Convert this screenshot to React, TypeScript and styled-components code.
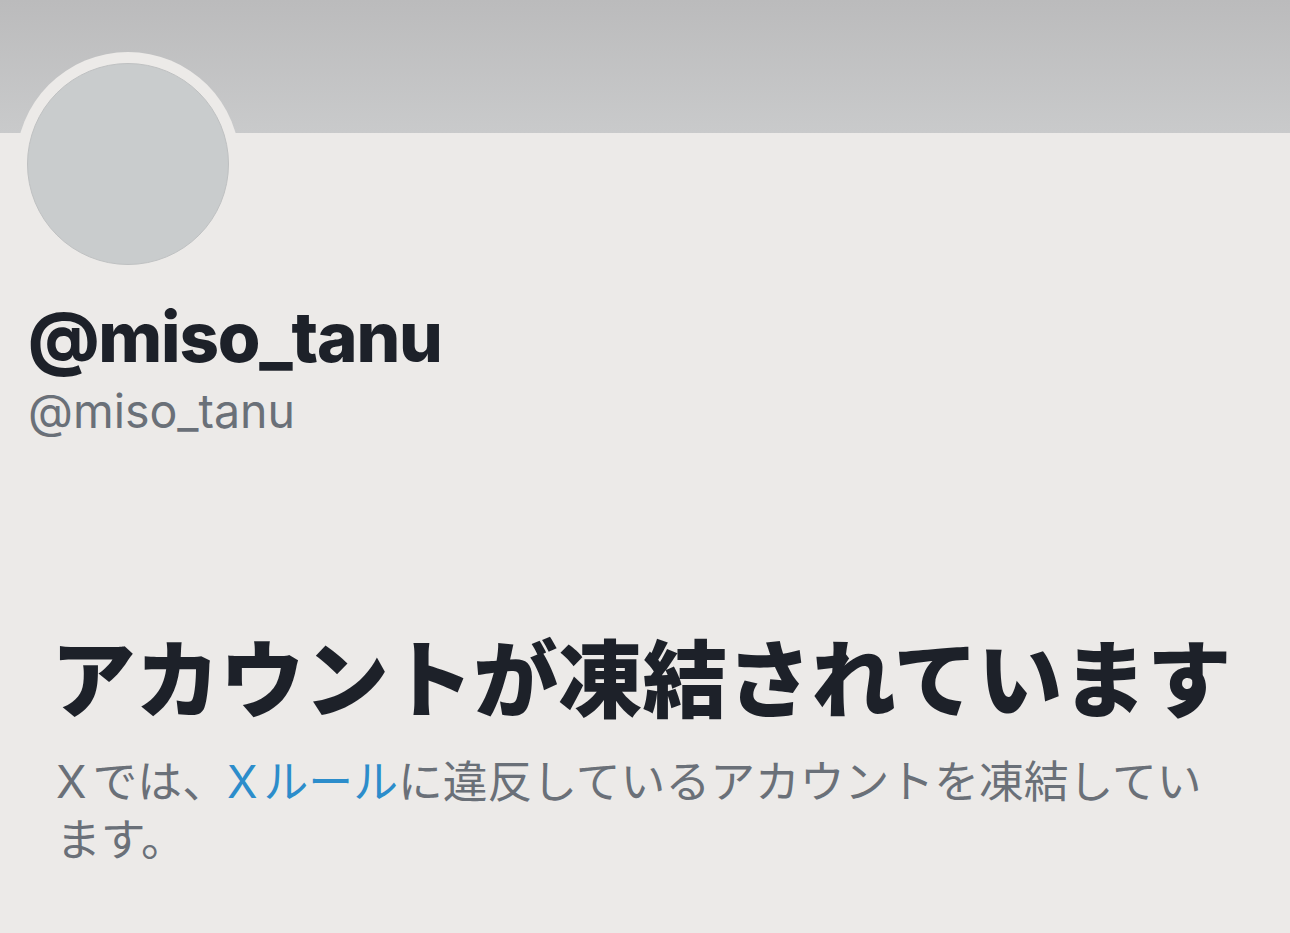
import React from "react";
import styled, { createGlobalStyle } from "styled-components";

const Global = createGlobalStyle`
  html, body { margin: 0; padding: 0; background: #ECEAE8; }
  body { width: 1290px; height: 933px; overflow: hidden; }
  * { box-sizing: border-box; }
`;

const Page = styled.div`
  width: 1290px;
  height: 933px;
  background: #eceae8;
  font-family: Inter, "Noto Sans CJK JP", sans-serif;
`;

const Banner = styled.div`
  height: 133px;
  background: linear-gradient(180deg, #bbbbbc 0%, #c9cacb 100%);
`;

const Profile = styled.section`
  padding: 0 28px;
`;

const AvatarRing = styled.div`
  width: 224px;
  height: 224px;
  margin: -81px 0 0 -12px;
  border-radius: 50%;
  background: #eceae8;
  padding: 11px;
`;

const Avatar = styled.div`
  width: 202px;
  height: 202px;
  border-radius: 50%;
  background: #c9cccd;
  border: 1px solid #bfc1c2;
`;

const DisplayName = styled.h1`
  margin: 19px 0 0;
  font-size: 69px;
  line-height: 84px;
  font-weight: 800;
  color: #1d2129;
  letter-spacing: -1.2px;
`;

const Handle = styled.div`
  margin-top: 4px;
  font-size: 46.5px;
  line-height: 56px;
  color: #6a7078;
`;

const Notice = styled.section`
  padding: 0 56px;
  margin-top: 185px;
`;

const Title = styled.h2`
  margin: 0 0 0 -5px;
  font-family: "Noto Sans CJK JP", sans-serif;
  font-size: 84.5px;
  line-height: 100px;
  font-weight: 800;
  color: #1d2129;
`;

const Body = styled.p`
  margin: 30px 0 0;
  font-size: 44.8px;
  line-height: 57.5px;
  color: #6a7078;
`;

const Latin = styled.span`
  margin-right: 6px;
`;

const RuleLink = styled.a`
  color: #2c8dcb;
  text-decoration: none;
`;

export default function App() {
  return (
    <Page>
      <Global />
      <Banner />
      <Profile>
        <AvatarRing>
          <Avatar />
        </AvatarRing>
        <DisplayName>@miso_tanu</DisplayName>
        <Handle>@miso_tanu</Handle>
      </Profile>
      <Notice>
        <Title>アカウントが凍結されています</Title>
        <Body>
          <Latin>X</Latin>では、
          <RuleLink href="#">
            <Latin>X</Latin>ルール
          </RuleLink>
          に違反しているアカウントを凍結しています。
        </Body>
      </Notice>
    </Page>
  );
}
